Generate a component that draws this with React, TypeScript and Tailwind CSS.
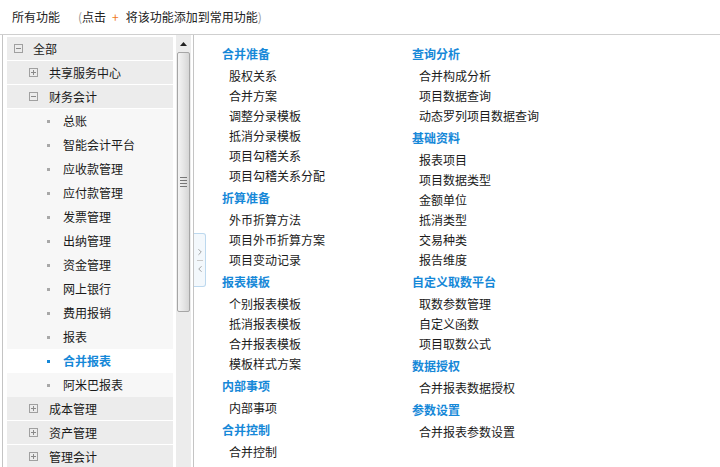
import { ChevronLeft, ChevronRight } from "lucide-react";

type Node = { label: string; level: 0 | 1 | 2; open?: boolean; active?: boolean };

const TREE: Node[] = [
  { label: "全部", level: 0, open: true },
  { label: "共享服务中心", level: 1 },
  { label: "财务会计", level: 1, open: true },
  { label: "总账", level: 2 },
  { label: "智能会计平台", level: 2 },
  { label: "应收款管理", level: 2 },
  { label: "应付款管理", level: 2 },
  { label: "发票管理", level: 2 },
  { label: "出纳管理", level: 2 },
  { label: "资金管理", level: 2 },
  { label: "网上银行", level: 2 },
  { label: "费用报销", level: 2 },
  { label: "报表", level: 2 },
  { label: "合并报表", level: 2, active: true },
  { label: "阿米巴报表", level: 2 },
  { label: "成本管理", level: 1 },
  { label: "资产管理", level: 1 },
  { label: "管理会计", level: 1 },
];

const COLS: { title: string; items: string[] }[][] = [
  [
    { title: "合并准备", items: ["股权关系", "合并方案", "调整分录模板", "抵消分录模板", "项目勾稽关系", "项目勾稽关系分配"] },
    { title: "折算准备", items: ["外币折算方法", "项目外币折算方案", "项目变动记录"] },
    { title: "报表模板", items: ["个别报表模板", "抵消报表模板", "合并报表模板", "模板样式方案"] },
    { title: "内部事项", items: ["内部事项"] },
    { title: "合并控制", items: ["合并控制"] },
  ],
  [
    { title: "查询分析", items: ["合并构成分析", "项目数据查询", "动态罗列项目数据查询"] },
    { title: "基础资料", items: ["报表项目", "项目数据类型", "金额单位", "抵消类型", "交易种类", "报告维度"] },
    { title: "自定义取数平台", items: ["取数参数管理", "自定义函数", "项目取数公式"] },
    { title: "数据授权", items: ["合并报表数据授权"] },
    { title: "参数设置", items: ["合并报表参数设置"] },
  ],
];

function ToggleBox({ open }: { open?: boolean }) {
  return (
    <svg width="9" height="9" viewBox="0 0 9 9" className="shrink-0">
      <rect x="0.5" y="0.5" width="8" height="8" fill="none" stroke="#a0a0a0" />
      <line x1="2" y1="4.5" x2="7" y2="4.5" stroke="#8a8a8a" />
      {!open && <line x1="4.5" y1="2" x2="4.5" y2="7" stroke="#8a8a8a" />}
    </svg>
  );
}

function TreeRow({ node }: { node: Node }) {
  if (node.level === 2) {
    return (
      <div
        className={`flex h-6 items-center pl-[40px] ${node.active ? "bg-white" : "bg-[#f7f7f7]"}`}
      >
        <span className={`size-[3px] ${node.active ? "bg-[#1688d8]" : "bg-[#a8a8a8]"}`} />
        <span
          className={`ml-[13px] ${node.active ? "font-bold text-[#1688d8]" : "text-[#1a1a1a]"}`}
        >
          {node.label}
        </span>
      </div>
    );
  }
  return (
    <div
      className={`flex h-6 items-center border-b border-white bg-[#ececec] ${node.level === 0 ? "pl-[7px]" : "pl-[22px]"}`}
    >
      <ToggleBox open={node.open} />
      <span className={`text-[#1a1a1a] ${node.level === 0 ? "ml-[10px]" : "ml-[11px]"}`}>{node.label}</span>
    </div>
  );
}

function Scrollbar() {
  return (
    <div className="ml-[3px] flex w-[15px] flex-col bg-[#ececec]">
      <div className="flex h-[17px] items-center justify-center">
        <svg width="7" height="4" viewBox="0 0 7 4">
          <path d="M0 4 L3.5 0 L7 4 Z" fill="#222" />
        </svg>
      </div>
      <div className="mx-[1px] flex h-[260px] items-center justify-center rounded-[2px] border border-[#a6a6a6] bg-gradient-to-r from-[#f4f4f4] via-[#e6e6e6] to-[#d6d6d6]">
        <div className="flex flex-col gap-[2px]">
          <span className="block h-px w-[7px] bg-[#777]" />
          <span className="block h-px w-[7px] bg-[#777]" />
          <span className="block h-px w-[7px] bg-[#777]" />
          <span className="block h-px w-[7px] bg-[#777]" />
        </div>
      </div>
    </div>
  );
}

export default function App() {
  return (
    <div
      className="flex h-[467px] w-[720px] flex-col overflow-hidden bg-white text-[12px] leading-none"
      style={{ fontFamily: '"Noto Sans CJK SC", "Liberation Sans", sans-serif' }}
    >
      <header className="flex h-[35px] shrink-0 items-center border-b border-[#cfcfcf] pl-[12px] text-[#222]">
        <span>所有功能</span>
        <span className="ml-[18px] text-[#999]">(</span>
        <span>点击</span>
        <span className="ml-[6px] mr-[7px] text-[#f07a1a]">+</span>
        <span>将该功能添加到常用功能</span>
        <span className="text-[#999]">)</span>
      </header>

      <div className="flex min-h-0 flex-1">
        <aside className="ml-[2px] flex w-[192px] shrink-0 border-r border-l border-[#c4c4c4]">
          <div className="ml-[4px] w-[166px] pt-[2px]">
            {TREE.map((n) => (
              <TreeRow key={n.label} node={n} />
            ))}
          </div>
          <Scrollbar />
        </aside>

        <main className="relative flex flex-1 pl-[28px] pt-[7px]">
          <div className="absolute left-0 top-[198px] flex h-[54px] w-[12px] flex-col items-center justify-center gap-[3px] rounded-r-[3px] border border-l-0 border-[#bcd8ee] bg-[#f3f8fc] text-[#777]">
            <ChevronRight size={10} strokeWidth={1.6} />
            <span className="block h-px w-[6px] bg-[#c8c8c8]" />
            <ChevronLeft size={10} strokeWidth={1.6} />
          </div>

          {COLS.map((col, ci) => (
            <div key={ci} className="w-[190px]">
              {col.map((g) => (
                <div key={g.title}>
                  <div className="flex h-6 items-center font-bold text-[#1688d8]">{g.title}</div>
                  {g.items.map((it) => (
                    <div key={it} className="flex h-5 items-center pl-[7px] text-[#1a1a1a]">
                      {it}
                    </div>
                  ))}
                </div>
              ))}
            </div>
          ))}
        </main>
      </div>
    </div>
  );
}
